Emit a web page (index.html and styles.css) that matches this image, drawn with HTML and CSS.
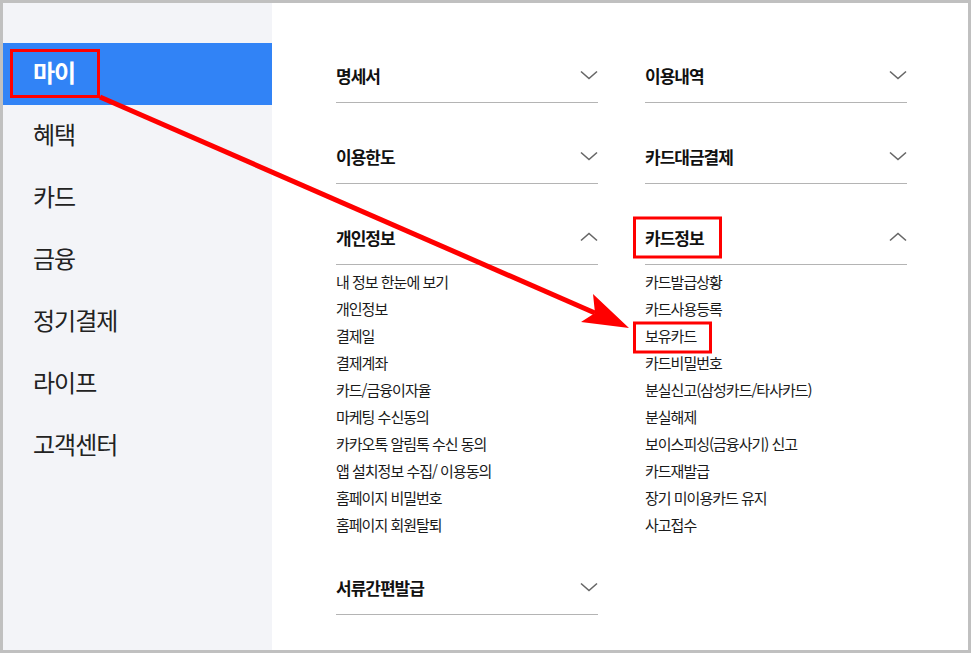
FILE: index.html
```html
<!DOCTYPE html>
<html lang="ko">
<head>
  <meta charset="UTF-8">
  <title>전체메뉴 - 마이</title>
  <link rel="stylesheet" href="styles.css">
</head>
<body>
<div class="frame">
  <!-- left menu -->
  <nav class="side">
    <a class="side-item active">마이</a>
    <a class="side-item">혜택</a>
    <a class="side-item">카드</a>
    <a class="side-item">금융</a>
    <a class="side-item">정기결제</a>
    <a class="side-item">라이프</a>
    <a class="side-item">고객센터</a>
  </nav>

  <!-- sub menus -->
  <main class="menu">
    <div class="col">
      <section class="group">
        <div class="group-head"><span>명세서</span><svg class="chev" viewBox="0 0 18 10"><path d="M1 1.5 L9 8.5 L17 1.5"/></svg></div>
      </section>
      <section class="group">
        <div class="group-head"><span>이용한도</span><svg class="chev" viewBox="0 0 18 10"><path d="M1 1.5 L9 8.5 L17 1.5"/></svg></div>
      </section>
      <section class="group open">
        <div class="group-head"><span>개인정보</span><svg class="chev" viewBox="0 0 18 10"><path d="M1 8.5 L9 1.5 L17 8.5"/></svg></div>
        <ul class="links">
          <li>내 정보 한눈에 보기</li>
          <li>개인정보</li>
          <li>결제일</li>
          <li>결제계좌</li>
          <li>카드/금융이자율</li>
          <li>마케팅 수신동의</li>
          <li>카카오톡 알림톡 수신 동의</li>
          <li>앱 설치정보 수집/ 이용동의</li>
          <li>홈페이지 비밀번호</li>
          <li>홈페이지 회원탈퇴</li>
        </ul>
      </section>
      <section class="group">
        <div class="group-head"><span>서류간편발급</span><svg class="chev" viewBox="0 0 18 10"><path d="M1 1.5 L9 8.5 L17 1.5"/></svg></div>
      </section>
    </div>

    <div class="col">
      <section class="group">
        <div class="group-head"><span>이용내역</span><svg class="chev" viewBox="0 0 18 10"><path d="M1 1.5 L9 8.5 L17 1.5"/></svg></div>
      </section>
      <section class="group">
        <div class="group-head"><span>카드대금결제</span><svg class="chev" viewBox="0 0 18 10"><path d="M1 1.5 L9 8.5 L17 1.5"/></svg></div>
      </section>
      <section class="group open">
        <div class="group-head"><span>카드정보</span><svg class="chev" viewBox="0 0 18 10"><path d="M1 8.5 L9 1.5 L17 8.5"/></svg></div>
        <ul class="links">
          <li>카드발급상황</li>
          <li>카드사용등록</li>
          <li>보유카드</li>
          <li>카드비밀번호</li>
          <li>분실신고(삼성카드/타사카드)</li>
          <li>분실해제</li>
          <li>보이스피싱(금융사기) 신고</li>
          <li>카드재발급</li>
          <li>장기 미이용카드 유지</li>
          <li>사고접수</li>
        </ul>
      </section>
    </div>
  </main>

  <!-- red annotation layer -->
  <svg class="marks" width="971" height="653" viewBox="0 0 971 653">
    <rect x="11.5" y="50.5" width="87" height="46"/>
    <rect x="634.5" y="218" width="86" height="39"/>
    <rect x="634.5" y="323" width="76" height="29"/>
    <line x1="100" y1="97" x2="595" y2="313"/>
    <polygon class="head" points="629,328 581,322 595,313 593,294"/>
  </svg>
</div>
</body>
</html>
```

FILE: styles.css
```css
body {
    margin: 0;
    font-family: "Noto Sans CJK KR", "Noto Sans", sans-serif;
    color: #222;
}
.frame {
    position: relative;
    box-sizing: border-box;
    width: 971px;
    height: 653px;
    border: 3px solid #c0c0c0;
    display: flex;
    background: #fff;
    overflow: hidden;
}
.side {
    width: 269px;
    flex: none;
    background: #f3f4f8;
    padding-top: 40px;
    display: flex;
    flex-direction: column;
}
.side-item {
    height: 62px;
    box-sizing: border-box;
    line-height: 58px;
    padding: 0 0 4px 30px;
    font-size: 24px;
    letter-spacing: -1px;
    color: #222;
}
.side-item.active {
    background: #3183f6;
    color: #fff;
    font-weight: 700;
}
.menu {
    flex: 1;
    display: flex;
    gap: 47px;
    padding: 49px 0 0 64px;
}
.col {
    width: 262px;
    display: flex;
    flex-direction: column;
    gap: 30px;
}
.group-head {
    height: 51px;
    box-sizing: border-box;
    padding-bottom: 4px;
    display: flex;
    align-items: center;
    justify-content: space-between;
    border-bottom: 1px solid #b4b4b4;
    font-size: 17px;
    font-weight: 700;
    letter-spacing: -1px;
    color: #111;
}
.chev {
    width: 18px;
    height: 10px;
    fill: none;
    stroke: #666;
    stroke-width: 1.6;
}
.links {
    list-style: none;
    margin: 0 0 -6px;
    padding: 5px 0 0;
}
.links li {
    height: 27px;
    box-sizing: border-box;
    line-height: 23px;
    padding-bottom: 4px;
    font-size: 15px;
    letter-spacing: -1px;
    color: #1a1a1a;
}
.marks {
    position: absolute;
    left: -3px;
    top: -3px;
    pointer-events: none;
}
.marks rect {
    fill: none;
    stroke: #f00;
    stroke-width: 3;
}
.marks line {
    stroke: #f00;
    stroke-width: 5;
}
.marks .head {
    fill: #f00;
}
```
